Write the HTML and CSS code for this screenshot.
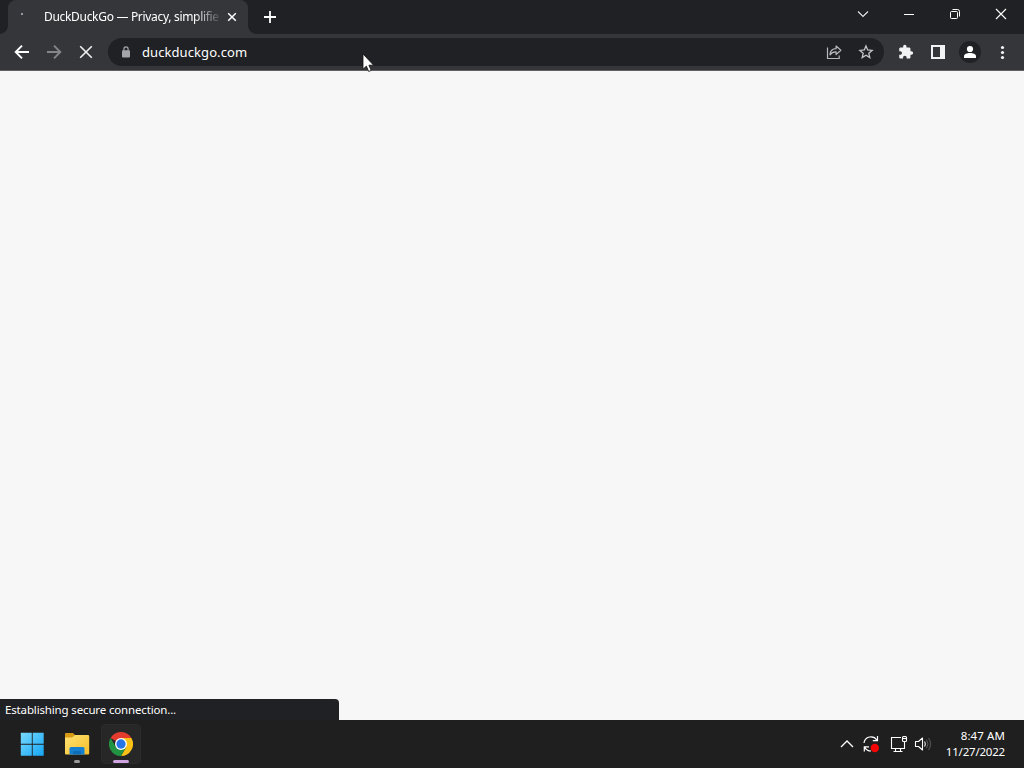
FILE: index.html
```html
<!DOCTYPE html>
<html lang="en">
<head>
<meta charset="utf-8">
<title>DuckDuckGo — Privacy, simplified.</title>
<link rel="stylesheet" href="styles.css">
</head>
<body>
<div class="desktop">
  <header class="tabstrip">
    <div class="tab">
      <span class="spinner"></span>
      <span class="tab-title">DuckDuckGo — Privacy, simplifie</span>
      <svg class="tab-close" width="10" height="10" viewBox="0 0 10 10"><path d="M1.200 1.200l7.600 7.600M8.800 1.200L1.200 8.800" stroke="#fff" stroke-width="1.500"/></svg>
    </div>
    <svg class="new-tab" width="14" height="14" viewBox="0 0 14 14"><path d="M7 1v12M1 7h12" stroke="#fff" stroke-width="1.8"/></svg>
    <div class="window-controls">
      <svg width="46" height="28" viewBox="0 0 46 28"><path d="M18 11.500l5 5 5-5" fill="none" stroke="#e8e8e8" stroke-width="1.1"/></svg>
      <svg width="46" height="28" viewBox="0 0 46 28"><path d="M18 14.500h10" stroke="#fff"/></svg>
      <svg width="46" height="28" viewBox="0 0 46 28"><g fill="none" stroke="#fff"><rect x="18.500" y="11.500" width="7" height="7" rx="1"/><path d="M20.500 9.500h5q2 0 2 2v5"/></g></svg>
      <svg width="46" height="28" viewBox="0 0 46 28"><path d="M18 9l10 10M28 9L18 19" stroke="#fff" stroke-width="1.1"/></svg>
    </div>
  </header>
  <nav class="toolbar">
    <div class="nav-buttons">
      <svg width="16" height="16" viewBox="0 0 16 16"><path d="M15 8H2M8 1.700L1.700 8 8 14.300" fill="none" stroke="#fff" stroke-width="1.900"/></svg>
      <svg width="16" height="16" viewBox="0 0 16 16"><path d="M1 8h13M8 1.700L14.300 8 8 14.300" fill="none" stroke="#85868a" stroke-width="1.900"/></svg>
      <svg width="16" height="16" viewBox="0 0 16 16"><path d="M2.200 2.200l11.600 11.600M13.800 2.200L2.200 13.800" stroke="#f1f1f1" stroke-width="1.600"/></svg>
    </div>
    <div class="omnibox">
      <svg class="lock" width="10" height="12" viewBox="0 0 10 12"><rect x="1" y="4.300" width="8" height="7.200" rx="1" fill="#a2a5a9"/><path d="M2.900 5V3a2.100 2.100 0 0 1 4.200 0v2" fill="none" stroke="#a2a5a9" stroke-width="1.200"/></svg>
      <span class="url">duckduckgo.com</span>
      <svg class="share" width="16" height="16" viewBox="0 0 16 16"><g fill="none" stroke="#b4b7bb" stroke-width="1.200"><path d="M1.500 3.500v11h11.700v-3"/><path d="M4 10.800C4.300 6.700 7 4.700 10.100 4.700V2l4.800 4.300-4.800 4.200V7.800C7.300 7.700 5.500 8.500 4 10.800z" stroke-linejoin="round"/></g></svg>
      <svg class="star" width="16" height="16" viewBox="0 0 16 16"><path d="M8 2l1.700 4 4.400.4-3.300 2.900 1 4.300L8 11.300l-3.800 2.300 1-4.300-3.300-2.900 4.400-.4z" fill="none" stroke="#c4c7ca" stroke-width="1.300"/></svg>
    </div>
    <div class="actions">
      <svg width="24" height="24" viewBox="0 0 24 24"><path transform="translate(3.900 4.100) scale(.66)" d="M20.500 11H19V7c0-1.100-.9-2-2-2h-4V3.500C13 2.120 11.880 1 10.500 1S8 2.120 8 3.500V5H4c-1.100 0-2 .9-2 2v3.800h1.500c1.490 0 2.700 1.210 2.700 2.700S4.990 16.200 3.500 16.200H2V20c0 1.100.9 2 2 2h3.800v-1.500c0-1.490 1.210-2.700 2.700-2.700s2.700 1.210 2.700 2.700V22H17c1.100 0 2-.9 2-2v-4h1.500c1.380 0 2.500-1.120 2.500-2.500S21.880 11 20.500 11z" fill="#f1f3f4"/></svg>
      <svg width="24" height="24" viewBox="0 0 24 24"><path fill-rule="evenodd" d="M5 5h14v14H5zM7 7v10h7V7z" fill="#f1f3f4"/></svg>
      <svg width="24" height="24" viewBox="0 0 24 24"><circle cx="12" cy="12" r="11" fill="#202124"/><circle cx="12" cy="9" r="3.100" fill="#fff"/><path d="M6 18v-1.800c0-2.100 3-3.200 6-3.200s6 1.100 6 3.200V18z" fill="#fff"/></svg>
      <svg width="24" height="24" viewBox="0 0 24 24"><g fill="#f1f3f4"><circle cx="12.500" cy="7.500" r="1.600"/><circle cx="12.500" cy="12.500" r="1.600"/><circle cx="12.500" cy="17.500" r="1.600"/></g></svg>
    </div>
  </nav>
  <main class="page">
    <div class="status">Establishing secure connection...</div>
  </main>
  <footer class="taskbar">
    <div class="apps">
      <div class="app">
        <svg width="24" height="24" viewBox="0 0 24 24"><defs><linearGradient id="win" x1="0" y1="0" x2="24" y2="24" gradientUnits="userSpaceOnUse"><stop stop-color="#7ddcff"/><stop offset="1" stop-color="#13a5f5"/></linearGradient></defs><path d="M.8.800h11v11H.8zM12.700.800h11v11h-11zM.8 12.700h11v11H.8zM12.700 12.700h11v11h-11z" fill="url(#win)"/></svg>
      </div>
      <div class="app files">
        <svg width="26" height="24" viewBox="0 0 26 24"><defs><linearGradient id="folder" x1="0" y1="0" x2="1" y2="1"><stop stop-color="#ffe375"/><stop offset="1" stop-color="#f6bd28"/></linearGradient></defs><path d="M1 2q0-1 1-1h7l3 3h-2L8 7H1z" fill="#d99a13"/><path d="M1 5.500h7l3-2.500h13q1.200 0 1.200 1.200v17.300q0 1-1 1H2q-1 0-1-1z" fill="url(#folder)"/><path d="M5.500 22.500v-6q0-1.500 1.500-1.500h12q1.500 0 1.500 1.500v6z" fill="#1580cf"/><path d="M9 22.500v-2.300q0-1.200 1.200-1.200h5.600q1.200 0 1.200 1.200v2.300z" fill="#0f6cb8"/></svg>
        <span class="indicator"></span>
      </div>
      <div class="app active">
        <svg width="24" height="24" viewBox="0 0 48 48"><path d="M24 24L3.200 12A24 24 0 0 1 44.800 12z" fill="#e33b2e"/><path d="M24 12h20.800A24 24 0 0 1 24 48l10.400-18z" fill="#fbc116"/><path d="M3.200 12A24 24 0 0 0 24 48l10.400-18L24 34l-10.400-4z" fill="#229342"/><circle cx="24" cy="24" r="12" fill="#fff"/><circle cx="24" cy="24" r="9.300" fill="#2674e6"/></svg>
        <span class="indicator indicator-active"></span>
      </div>
    </div>
    <div class="tray">
      <svg width="14" height="16" viewBox="0 0 14 16"><path d="M1 11l6-6 6 6" fill="none" stroke="#fff" stroke-width="1.300"/></svg>
      <svg class="update" width="18" height="18" viewBox="0 0 18 18"><g fill="none" stroke="#fff" stroke-width="1.200"><path d="M2 8A7 7 0 0 1 14.800 5M15.500 1v4.700h-4.700M2.300 16.500v-4.700H7M2.800 12.200C4 15 6.200 16 9 16"/></g><circle cx="12.800" cy="13" r="4.200" fill="#f50505"/></svg>
      <svg class="network" width="18" height="18" viewBox="0 0 18 18"><g fill="none" stroke="#fff" stroke-width="1.100"><path d="M11 2.500H1.500v11h13V8M5.500 13.500v3M10.500 13.500v3M3.500 16.500h9M14.500 6v4"/><rect x="12.500" y="1.500" width="4" height="5" rx="1"/><path d="M12.500 3.500h4"/></g></svg>
      <svg class="volume" width="18" height="16" viewBox="0 0 18 16"><path d="M1.500 5.500h3L8.500 2v12l-4-3.500h-3z" fill="none" stroke="#fff" stroke-width="1.100" stroke-linejoin="round"/><path d="M10.500 5.500q1.700 2.500 0 5" fill="none" stroke="#ddd" stroke-width="1.100"/><path d="M12.500 3.700q3 4.300 0 8.600M14.500 2q4 6 0 12" fill="none" stroke="#5c5c5c"/></svg>
    </div>
    <div class="clock"><span class="time">8:47 AM</span><span class="date">11/27/2022</span></div>
  </footer>
  <svg class="cursor" width="13" height="20" viewBox="0 0 13 20"><path d="M1 1v15.300l3.400-3.200 2.300 5.400 2.500-1.100-2.300-5.200h4.700z" fill="#fff" stroke="#111" stroke-width=".8"/></svg>
</div>
</body>
</html>
```
FILE: styles.css
```css
* { box-sizing: border-box; }
body {
  margin: 0;
  font-family: "Noto Sans", "Open Sans", sans-serif;
  color: #fff;
}
svg { display: block; flex: none; }
.desktop {
  position: relative;
  display: flex;
  flex-direction: column;
  width: 1024px;
  height: 768px;
  overflow: hidden;
  background: #f7f7f7;
}
.tabstrip {
  display: flex;
  height: 34px;
  padding-left: 8px;
  background: #202124;
}
.tab {
  position: relative;
  display: flex;
  align-items: center;
  width: 240px;
  padding: 0 11px 0 12px;
  border-radius: 8px 8px 0 0;
  background: #35363a;
}
.tab::before,
.tab::after {
  content: "";
  position: absolute;
  bottom: 0;
  width: 8px;
  height: 8px;
}
.tab::before {
  left: -8px;
  background: radial-gradient(circle at 0 0, #202124 7.5px, #35363a 8px);
}
.tab::after {
  right: -8px;
  background: radial-gradient(circle at 100% 0, #202124 7.5px, #35363a 8px);
}
.spinner {
  width: 2px;
  height: 2px;
  margin: 0 21px 7px 1px;
  border-radius: 1px;
  background: #b5bdc8;
}
.tab-title {
  width: 177px;
  margin-right: 6px;
  white-space: nowrap;
  font-size: 12px;
  line-height: 18px;
  letter-spacing: -0.31px;
  -webkit-mask-image: linear-gradient(90deg, #000 150px, transparent 179px);
  mask-image: linear-gradient(90deg, #000 150px, transparent 179px);
}
.tab-close { margin-left: auto; }
.new-tab { margin: 10px 0 0 15px; }
.window-controls { display: flex; margin-left: auto; }
.toolbar {
  display: flex;
  align-items: center;
  height: 37px;
  padding: 0 10px 0 14px;
  background: #35363a;
  border-bottom: 1px solid #625f62;
}
.nav-buttons { display: flex; gap: 16px; }
.omnibox {
  display: flex;
  align-items: center;
  width: 776px;
  height: 28px;
  margin-left: 14px;
  padding: 0 10px 0 13px;
  border-radius: 14px;
  background: #202124;
}
.url {
  margin-left: 11px;
  font-size: 13px;
  line-height: 20px;
  letter-spacing: 0.08px;
}
.share { margin: 0 16px 0 auto; }
.actions { display: flex; gap: 8px; margin-left: auto; }
.page {
  display: flex;
  flex: 1;
  align-items: flex-end;
}
.status {
  width: 339px;
  height: 21px;
  padding-left: 5px;
  border-radius: 0 4px 0 0;
  background: #202124;
  font-size: 11.5px;
  line-height: 21px;
  letter-spacing: -0.15px;
}
.taskbar {
  display: flex;
  height: 48px;
  padding: 4px 19px 4px 12px;
  background: #1f1f1f;
}
.apps { display: flex; gap: 4px; }
.app {
  position: relative;
  display: flex;
  align-items: center;
  justify-content: center;
  width: 40px;
  height: 40px;
  border-radius: 4px;
}
.files { margin: 0 -1px 0 1px; }
.active {
  margin-left: 1px;
  background: #272727;
  border: 1px solid #2b2b2b;
}
.indicator {
  position: absolute;
  bottom: 1px;
  left: 17px;
  width: 6px;
  height: 3px;
  border-radius: 2px;
  background: #999;
}
.indicator-active {
  bottom: 0;
  left: 11px;
  width: 16px;
  background: #d0a4e0;
}
.tray {
  display: flex;
  align-items: center;
  margin-left: auto;
}
.update { margin-left: 8px; }
.network { margin-left: 10px; }
.volume { margin-left: 6px; }
.clock {
  display: flex;
  flex-direction: column;
  align-items: flex-end;
  width: 73px;
  padding-top: 4px;
  font-size: 11.5px;
  line-height: 16px;
  letter-spacing: -0.2px;
}
.time { letter-spacing: 0.1px; }
.cursor {
  position: absolute;
  left: 362px;
  top: 53px;
}
```
